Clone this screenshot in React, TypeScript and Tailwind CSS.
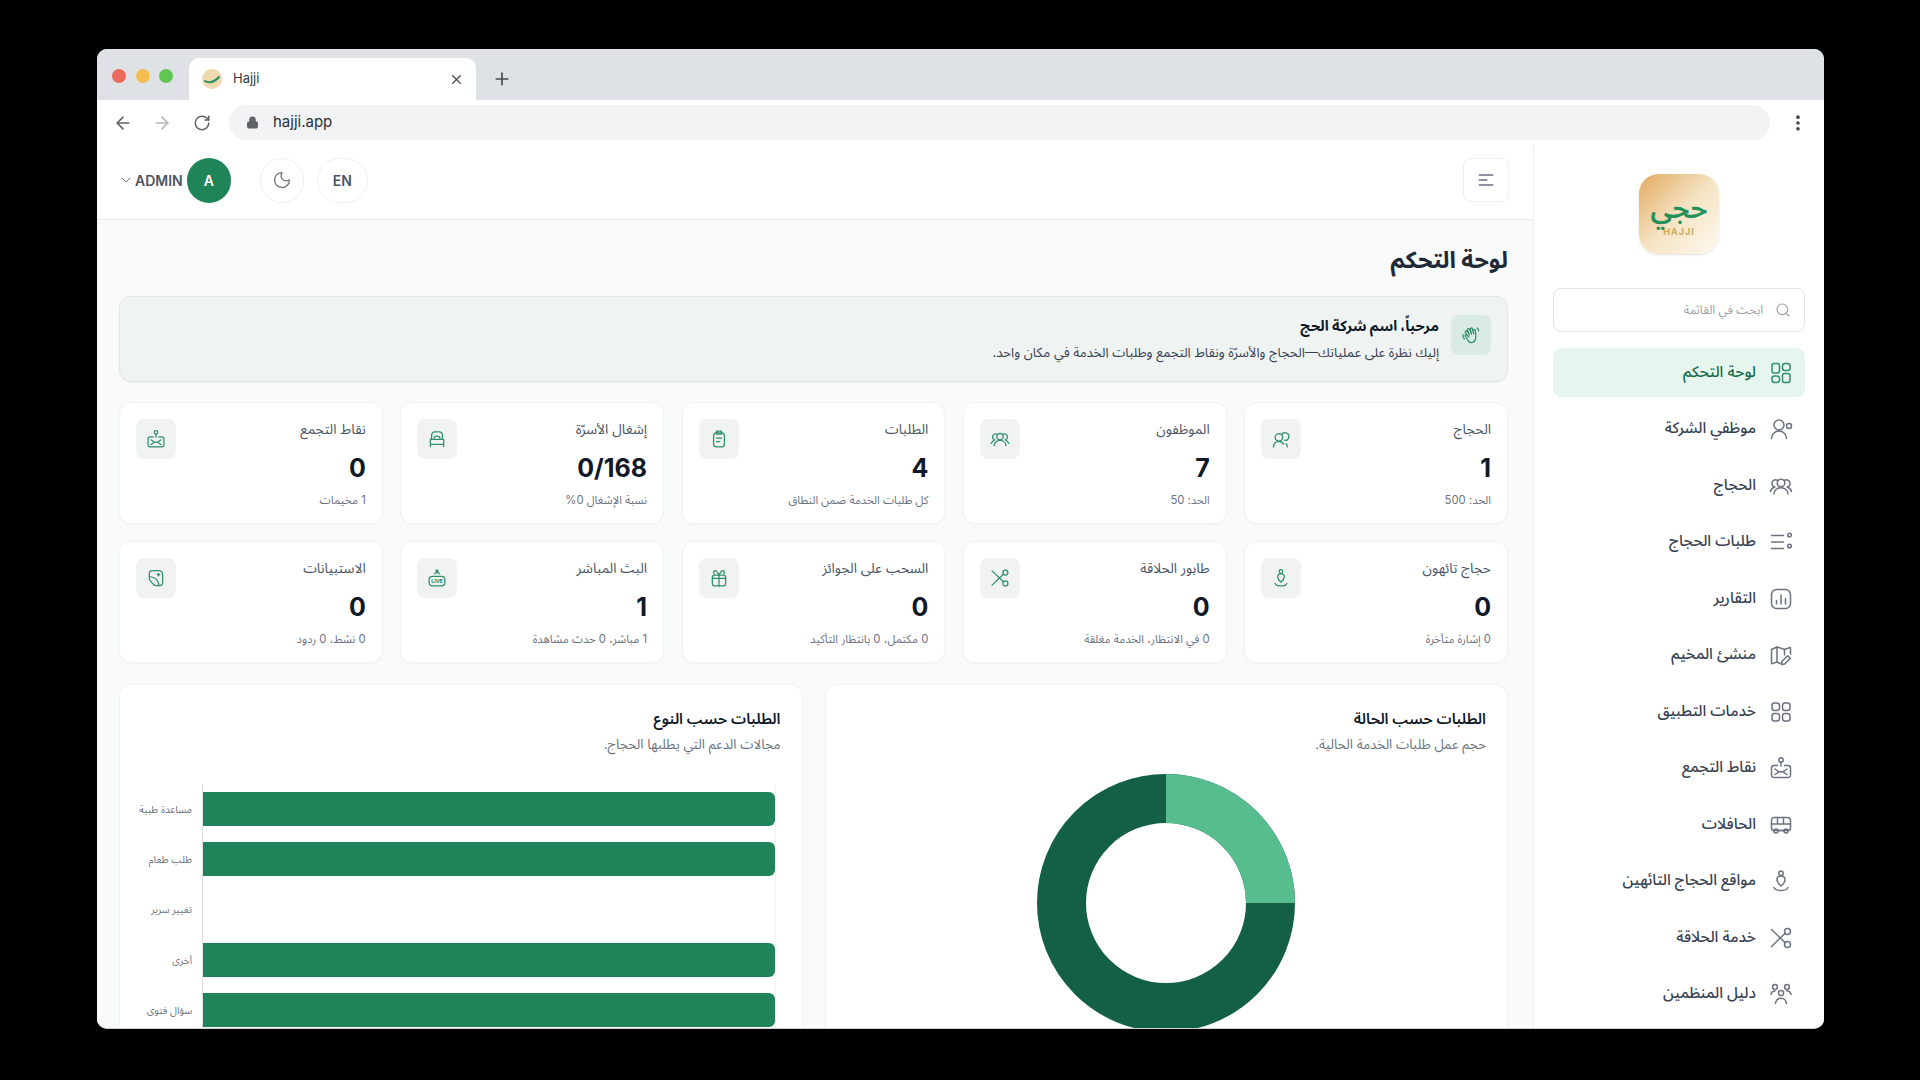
import React from "react";
import { ArrowLeft, ArrowRight, ChevronDown, EllipsisVertical, Lock, Moon, Plus, RotateCw, Search, X } from "lucide-react";

type IconProps = { className?: string };

const Svg = ({ className, children }: IconProps & { children: React.ReactNode }) => (
  <svg viewBox="0 0 24 24" fill="none" stroke="currentColor" strokeWidth="1.5" strokeLinecap="round" strokeLinejoin="round" className={className}>
    {children}
  </svg>
);

const DashboardIcon = (p: IconProps) => (
  <Svg {...p}>
    <rect x="3" y="2.5" width="7.5" height="9.5" rx="2" />
    <rect x="13.5" y="2.5" width="7.5" height="7" rx="2.5" />
    <rect x="3" y="15" width="7.5" height="6.5" rx="2.5" />
    <rect x="13.5" y="12.5" width="7.5" height="9" rx="2" />
  </Svg>
);
const ServicesIcon = (p: IconProps) => (
  <Svg {...p}>
    <rect x="3" y="3" width="7.5" height="7.5" rx="2.5" />
    <rect x="13.5" y="3" width="7.5" height="7.5" rx="2.5" />
    <rect x="3" y="13.5" width="7.5" height="7.5" rx="2.5" />
    <rect x="13.5" y="13.5" width="7.5" height="7.5" rx="2.5" />
  </Svg>
);
const StaffIcon = (p: IconProps) => (
  <Svg {...p}>
    <circle cx="10" cy="8" r="5" />
    <path d="M2.5 21.5c0-4.2 3.4-7.5 7.5-7.5s7.5 3.3 7.5 7.5" />
    <circle cx="20" cy="9" r="2.5" />
  </Svg>
);
const PilgrimsIcon = (p: IconProps) => (
  <Svg {...p}>
    <circle cx="12" cy="9" r="3.8" />
    <path d="M5 20c0-3.6 3-6.3 7-6.3s7 2.7 7 6.3" />
    <path d="M8.7 6.6A3.6 3.6 0 1 0 5.8 13C3.6 13.8 2 15.5 1.5 17.5" />
    <path d="M15.3 6.6A3.6 3.6 0 1 1 18.2 13c2.2.8 3.8 2.5 4.3 4.5" />
  </Svg>
);
const RequestsIcon = (p: IconProps) => (
  <Svg {...p}>
    <path d="M2.5 5.5h12M2.5 12h12M2.5 18.5h12" />
    <circle cx="20.5" cy="5" r="1.8" />
    <circle cx="20.5" cy="16" r="1.8" />
  </Svg>
);
const ReportsIcon = (p: IconProps) => (
  <Svg {...p}>
    <rect x="2.5" y="2.5" width="19" height="19" rx="5" />
    <path d="M7.5 13.5V17M12 8v9M16.5 11.5V17" />
  </Svg>
);
const MapEditIcon = (p: IconProps) => (
  <Svg {...p}>
    <path d="M11 20.5 8 19l-4.8 1.6c-.4.1-.7-.1-.7-.5V6.5L8 4l7.5 2.5L21 4.5c.3-.1.5.1.5.4V11" />
    <path d="M8 4v15M15.5 6.5V12" />
    <path d="M18.6 12.7l2.7 2.7-5.6 5.6-3.2.5.5-3.2z" />
  </Svg>
);
const GatherIcon = (p: IconProps) => (
  <Svg {...p}>
    <circle cx="12" cy="4" r="2.2" />
    <path d="M12 6.2V10" />
    <path d="M8.5 9.5H5a2.5 2.5 0 0 0-2.5 2.5v7A2.5 2.5 0 0 0 5 21.5h14a2.5 2.5 0 0 0 2.5-2.5v-7A2.5 2.5 0 0 0 19 9.5h-3.5" />
    <path d="M6 13l4 2.8L6 18.5M18 13l-4 2.8 4 2.7M10 15.8h4" />
  </Svg>
);
const BusIcon = (p: IconProps) => (
  <Svg {...p}>
    <path d="M5 4.5h13.5a3 3 0 0 1 3 3V15a2.5 2.5 0 0 1-2.5 2.5H5A2.5 2.5 0 0 1 2.5 15V7A2.5 2.5 0 0 1 5 4.5z" />
    <path d="M2.5 11h19M8.5 4.5V11M14.5 4.5V11M9 17.5h6" />
    <circle cx="7" cy="18" r="2" />
    <circle cx="17" cy="18" r="2" />
  </Svg>
);
const LostIcon = (p: IconProps) => (
  <Svg {...p}>
    <circle cx="12" cy="4.2" r="2.2" />
    <path d="M8 10.5C8 8.2 9.7 7 12 7s4 1.2 4 3.5c0 2.5-2.2 5-4 6.5-1.8-1.5-4-4-4-6.5z" />
    <path d="M5 18.5c1 2 3.8 3 7 3s6-1 7-3" />
  </Svg>
);
const ScissorsIcon = (p: IconProps) => (
  <Svg {...p}>
    <circle cx="18.5" cy="5.5" r="3" />
    <circle cx="18.5" cy="18.5" r="3" />
    <path d="M2.5 3.5l13.5 13M2.5 20.5 16 7.5" />
  </Svg>
);
const OrganizersIcon = (p: IconProps) => (
  <Svg {...p}>
    <circle cx="6" cy="5" r="2.4" />
    <circle cx="18" cy="5" r="2.4" />
    <circle cx="12" cy="11" r="2.6" />
    <path d="M2 12.5c.3-2 2-3.6 4-3.6M22 12.5c-.3-2-2-3.6-4-3.6M6.5 21.5c0-3 2.5-5.2 5.5-5.2s5.5 2.2 5.5 5.2" />
  </Svg>
);
const UsersIcon = (p: IconProps) => (
  <Svg {...p}>
    <circle cx="9.5" cy="10" r="4.5" />
    <path d="M13 7a4.5 4.5 0 1 1 3 6.5" />
    <path d="M3 21.5c0-3.8 2.9-6.8 6.5-6.8 2.4 0 4.6 1.4 5.7 3.4" />
    <path d="M19.5 21.5c0-1.5-.4-2.8-1.2-4" />
  </Svg>
);
const BedIcon = (p: IconProps) => (
  <Svg {...p}>
    <path d="M5.5 12.5V7.5a4 4 0 0 1 4-4h5a4 4 0 0 1 4 4v5" />
    <path d="M8.5 11c0-1.5 1.5-2.5 3.5-2.5s3.5 1 3.5 2.5" />
    <path d="M4 12.5h16v6H4zM4 18.5v2.5M20 18.5v2.5" />
  </Svg>
);
const ClipboardIcon = (p: IconProps) => (
  <Svg {...p}>
    <rect x="5.5" y="4.5" width="13" height="17" rx="3.5" />
    <path d="M9 2.5h6V6H9zM9 11h6M9 15h4" />
  </Svg>
);
const GiftIcon = (p: IconProps) => (
  <Svg {...p}>
    <rect x="4" y="8.5" width="16" height="13" rx="3" />
    <path d="M4 12.5h16M12 8.5v13" />
    <path d="M12 8.5C10.5 5.5 9 3 7.5 3S5 5 6 7M12 8.5c1.5-3 3-5.500 4.5-5.500S19 5 18 7" />
  </Svg>
);
const LiveIcon = (p: IconProps) => (
  <Svg {...p}>
    <rect x="2.5" y="10" width="19" height="11.5" rx="4" />
    <path d="M9 7a4 4 0 0 1 6 0" />
    <circle cx="12" cy="3.5" r="1.2" />
    <text x="12" y="18" textAnchor="middle" fontSize="6.4" fontWeight="700" stroke="none" fill="currentColor" fontFamily="Inter">LIVE</text>
  </Svg>
);
const SurveyIcon = (p: IconProps) => (
  <Svg {...p}>
    <path d="M7.5 3H15a5 5 0 0 1 5 5v9a4 4 0 0 1-4 4h-4a4.5 4.5 0 0 1-3.7-2L4.500 14.500A3 3 0 0 1 4 13V6.500A3.500 3.500 0 0 1 7.500 3z" />
    <path d="M4 10.5c4 .2 7 1.3 9 4 1.3 1.8 2.3 4 2.3 6.5" />
    <path d="M15 6.5v3M13.5 8h3" />
  </Svg>
);
const WaveIcon = (p: IconProps) => (
  <Svg {...p}>
    <path d="M7.5 13 5.2 8.8a1.3 1.3 0 0 1 2.3-1.2l2.6 4.4M10 12 7.8 6.2a1.3 1.3 0 0 1 2.5-1l2.300 5.800M12.500 10.500 11.200 5a1.300 1.300 0 0 1 2.500-.6l1.500 6M15 10.500l-.3-3.500a1.300 1.300 0 0 1 2.600-.2l.5 7c.2 3.500-.8 5-2.300 6.300-2 1.700-5 1.200-6.500-.6L5 13.500a1.300 1.300 0 0 1 2-1.600l2.500 2.600" />
    <path d="M2.5 11.5c-.5 2 0 4 1.5 5.500M19.500 3.500c1 .8 1.600 2 1.800 3.500" />
  </Svg>
);

const menu = [
  { label: "لوحة التحكم", Icon: DashboardIcon, active: true },
  { label: "موظفي الشركة", Icon: StaffIcon },
  { label: "الحجاج", Icon: PilgrimsIcon },
  { label: "طلبات الحجاج", Icon: RequestsIcon },
  { label: "التقارير", Icon: ReportsIcon },
  { label: "منشئ المخيم", Icon: MapEditIcon },
  { label: "خدمات التطبيق", Icon: ServicesIcon },
  { label: "نقاط التجمع", Icon: GatherIcon },
  { label: "الحافلات", Icon: BusIcon },
  { label: "مواقع الحجاج التائهين", Icon: LostIcon },
  { label: "خدمة الحلاقة", Icon: ScissorsIcon },
  { label: "دليل المنظمين", Icon: OrganizersIcon },
];

const stats = [
  { title: "الحجاج", value: "1", sub: "الحد: 500", Icon: UsersIcon },
  { title: "الموظفون", value: "7", sub: "الحد: 50", Icon: PilgrimsIcon },
  { title: "الطلبات", value: "4", sub: "كل طلبات الخدمة ضمن النطاق", Icon: ClipboardIcon },
  { title: "إشغال الأسرّة", value: "0/168", sub: "نسبة الإشغال 0%", Icon: BedIcon },
  { title: "نقاط التجمع", value: "0", sub: "1 مخيمات", Icon: GatherIcon },
  { title: "حجاج تائهون", value: "0", sub: "0 إشارة متأخرة", Icon: LostIcon },
  { title: "طابور الحلاقة", value: "0", sub: "0 في الانتظار، الخدمة مغلقة", Icon: ScissorsIcon },
  { title: "السحب على الجوائز", value: "0", sub: "0 مكتمل، 0 بانتظار التأكيد", Icon: GiftIcon },
  { title: "البث المباشر", value: "1", sub: "1 مباشر، 0 حدث مشاهدة", Icon: LiveIcon },
  { title: "الاستبيانات", value: "0", sub: "0 نشط، 0 ردود", Icon: SurveyIcon },
];

const bars = [
  { label: "مساعدة طبية", filled: true },
  { label: "طلب طعام", filled: true },
  { label: "تغيير سرير", filled: false },
  { label: "أخرى", filled: true },
  { label: "سؤال فتوى", filled: true },
];

const BrowserChrome = () => (
  <div dir="ltr" className="shrink-0">
    <div className="flex h-[51px] items-end bg-[#dee1e6] pl-[15px]">
      <div className="flex h-full items-center gap-[9.5px] pt-[3px]">
        <span className="h-[14px] w-[14px] rounded-full bg-[#ec6a5e]" />
        <span className="h-[14px] w-[14px] rounded-full bg-[#f4bf4f]" />
        <span className="h-[14px] w-[14px] rounded-full bg-[#61c554]" />
      </div>
      <div className="ml-[16px] flex h-[42px] w-[287px] items-center rounded-t-[10px] bg-white pl-[13px] pr-[12px]">
        <svg viewBox="0 0 20 20" className="h-[20px] w-[20px]" fill="none">
          <circle cx="10" cy="10" r="10" fill="#efd9ae" />
          <path d="M3 12c3 2 9 2 14-4" stroke="#2f8f68" strokeWidth="2" strokeLinecap="round" />
        </svg>
        <span className="ml-[11px] text-[13px] text-[#333a40]">Hajji</span>
        <X className="ml-auto h-[15px] w-[15px] text-[#45494d]" strokeWidth={2} />
      </div>
      <Plus className="mb-[11px] ml-[16px] h-[20px] w-[20px] text-[#45494d]" strokeWidth={2} />
    </div>
    <div className="flex h-[45px] items-center bg-white pl-[16px]">
      <ArrowLeft className="h-[20px] w-[20px] text-[#5f6368]" strokeWidth={2} />
      <ArrowRight className="ml-[19px] h-[20px] w-[20px] text-[#b5b8bc]" strokeWidth={2} />
      <RotateCw className="ml-[21px] h-[18px] w-[18px] text-[#5f6368]" strokeWidth={2} />
      <div className="ml-[18px] flex h-[35px] w-[1541px] items-center rounded-full bg-[#f1f3f4] pl-[17px]">
        <Lock className="h-[13px] w-[13px] fill-[#5f6368] text-[#5f6368]" strokeWidth={2} />
        <span className="ml-[14px] text-[15px] text-[#2c3135]">hajji.app</span>
      </div>
      <EllipsisVertical className="ml-[18px] h-[20px] w-[20px] text-[#45494d]" strokeWidth={2.4} />
    </div>
  </div>
);

const Sidebar = () => (
  <aside className="flex w-[291px] shrink-0 flex-col items-stretch border-l border-[#eceff2] bg-white px-[19px] pt-[29px]">
    <div className="mx-auto flex h-[80px] w-[80px] flex-col items-center justify-center rounded-[20px] bg-gradient-to-br from-[#e2a95c] via-[#f5e3c3] to-[#fdf9f0] shadow-sm">
      <span dir="rtl" className="text-[28px] font-semibold leading-[32px] text-[#23915c]">حجي</span>
      <span dir="ltr" className="mt-[3px] text-[9px] font-bold leading-[10px] tracking-[1px] text-[#cfa659]">HAJJI</span>
    </div>
    <div className="mt-[34px] flex h-[44px] items-center gap-[12px] rounded-lg border border-[#dfe3e7] pr-[13px]">
      <Search className="h-[16px] w-[16px] text-[#9aa1a9]" strokeWidth={1.75} />
      <span className="text-[12px] text-[#9aa1a9]">ابحث في القائمة</span>
    </div>
    <nav className="mt-[16px] flex flex-col gap-[7.5px]">
      {menu.map(({ label, Icon, active }) => (
        <div
          key={label}
          className={`flex h-[49px] shrink-0 items-center gap-[13px] rounded-lg pr-[12px] ${active ? "bg-[#e6f6ef] text-[#146c4a]" : "text-[#374151]"}`}
        >
          <Icon className={`h-[24px] w-[24px] ${active ? "text-[#2f8f68]" : "text-[#6b7280]"}`} />
          <span className="pb-[1px] text-[15.3px] font-medium">{label}</span>
        </div>
      ))}
    </nav>
  </aside>
);

const Header = () => (
  <header className="flex h-[75px] shrink-0 items-center justify-between border-b border-[#e9ecef] bg-white pb-[4px] pl-[21px] pr-[24px]">
    <button className="flex h-[44px] w-[46px] items-center justify-center rounded-lg border border-[#eceff2] text-[#6b7280]">
      <svg viewBox="0 0 24 24" fill="none" stroke="currentColor" strokeWidth="1.75" strokeLinecap="round" className="h-[20px] w-[20px]">
        <path d="M4 6h16M4 12h9M4 18h16" />
      </svg>
    </button>
    <div className="flex items-center">
      <span className="flex h-[45px] w-[51px] items-center justify-center rounded-full border border-[#eceff2] text-[14px] font-semibold text-[#4b5563]">EN</span>
      <span className="mr-[13px] flex h-[45px] w-[44px] items-center justify-center rounded-full border border-[#eceff2] text-[#6b7280]">
        <Moon className="h-[20px] w-[20px]" strokeWidth={1.5} />
      </span>
      <span className="mr-[29px] flex h-[45px] w-[44px] items-center justify-center rounded-full bg-[#1f8559] text-[14px] font-semibold text-white">A</span>
      <span className="mr-[4px] text-[14px] font-semibold text-[#4b5563]">ADMIN</span>
      <ChevronDown className="mr-[1px] h-[16px] w-[16px] text-[#6b7280]" strokeWidth={1.5} />
    </div>
  </header>
);

const StatCard = ({ title, value, sub, Icon }: (typeof stats)[number]) => (
  <div className="flex h-[122px] items-start justify-between rounded-xl border border-[#f0f2f4] bg-white p-[16px] shadow-[0_1px_2px_rgba(0,0,0,0.03)]">
    <div className="flex flex-col">
      <span className="text-[13.8px] leading-[20px] text-[#4b5563]">{title}</span>
      <span dir="ltr" className="mt-[12.5px] text-right text-[25px] font-bold leading-[32px] text-[#111827]">{value}</span>
      <span className="mt-[8px] text-[11.3px] leading-[16px] text-[#6b7280]">{sub}</span>
    </div>
    <div className="flex h-[40px] w-[40px] items-center justify-center rounded-lg bg-[#f0f3f1] text-[#2f8f68]">
      <Icon className="h-[20px] w-[20px]" />
    </div>
  </div>
);

const ChartTitle = ({ title, sub }: { title: string; sub: string }) => (
  <>
    <h3 className="text-[15px] font-semibold leading-[24px] text-[#111827]">{title}</h3>
    <p className="mt-[3px] text-[13.3px] leading-[20px] text-[#6b7280]">{sub}</p>
  </>
);

export default function App() {
  return (
    <div className="h-screen w-screen overflow-hidden bg-black pl-[97px] pt-[49px] font-['Inter','Noto_Sans_Arabic','DejaVu_Sans',sans-serif]">
      <div className="flex h-[980px] w-[1727px] flex-col overflow-hidden rounded-[10px] border-b border-[#cfd2d5] bg-white">
        <BrowserChrome />
        <div dir="rtl" className="flex min-h-0 flex-1">
          <Sidebar />
          <main className="flex min-w-0 flex-1 flex-col bg-[#f9fbfb]">
            <Header />
            <div className="flex min-h-0 flex-1 flex-col overflow-hidden pl-[22px] pr-[25px] pt-[24px]">
              <h1 className="text-[23.3px] font-bold leading-[32px] text-[#1f2937]">لوحة التحكم</h1>
              <section className="mt-[20px] flex h-[86px] shrink-0 items-center gap-[12px] rounded-xl border border-[#dfe7e4] bg-[#eff4f2] px-[16px] shadow-[0_1px_2px_rgba(0,0,0,0.04)]">
                <div className="-mt-[9px] flex h-[40px] w-[40px] items-center justify-center rounded-lg bg-[#d9ebe3] text-[#2f8f68]">
                  <WaveIcon className="h-[20px] w-[20px]" />
                </div>
                <div className="flex flex-col gap-[4px]">
                  <h2 className="-mt-[2px] text-[14.5px] font-bold leading-[24px] text-[#111827]">مرحباً، اسم شركة الحج</h2>
                  <p className="text-[13.2px] leading-[20px] text-[#374151]">إليك نظرة على عملياتك—الحجاج والأسرّة ونقاط التجمع وطلبات الخدمة في مكان واحد.</p>
                </div>
              </section>
              <section className="mt-[20px] grid shrink-0 grid-cols-5 gap-x-[17.6px] gap-y-[17px]">
                {stats.map((s) => (
                  <StatCard key={s.title} {...s} />
                ))}
              </section>
              <section className="mt-[21px] grid min-h-0 flex-1 grid-cols-2 gap-[22px]">
                <div className="rounded-t-xl border border-[#f0f2f4] bg-white px-[21px] pt-[21.5px]">
                  <ChartTitle title="الطلبات حسب الحالة" sub="حجم عمل طلبات الخدمة الحالية." />
                  <svg viewBox="0 0 258 258" className="mx-auto mt-[20.5px] h-[258px] w-[258px]" fill="none">
                    <circle cx="129" cy="129" r="104.5" stroke="#146044" strokeWidth="49" />
                    <path d="M129 24.5A104.5 104.5 0 0 1 233.5 129" stroke="#57bd8e" strokeWidth="49" />
                  </svg>
                </div>
                <div className="rounded-t-xl border border-[#f0f2f4] bg-white px-[21px] pt-[21.5px]">
                  <ChartTitle title="الطلبات حسب النوع" sub="مجالات الدعم التي يطلبها الحجاج." />
                  <div dir="ltr" className="mr-[5px] mt-[30.5px] flex flex-col">
                    {bars.map((b) => (
                      <div key={b.label} className="flex h-[50.3px] shrink-0 items-center">
                        <span dir="rtl" className="w-[61px] shrink-0 whitespace-nowrap pr-[10px] text-right text-[10px] text-[#6b7280]">{b.label}</span>
                        <div className="flex h-full flex-1 items-center border-l border-r border-l-[#d9dde1] border-r-[#f0f2f4]">
                          {b.filled && <div className="h-[34px] w-full rounded-r-[6px] bg-[#20845a]" />}
                        </div>
                      </div>
                    ))}
                  </div>
                </div>
              </section>
            </div>
          </main>
        </div>
      </div>
    </div>
  );
}
